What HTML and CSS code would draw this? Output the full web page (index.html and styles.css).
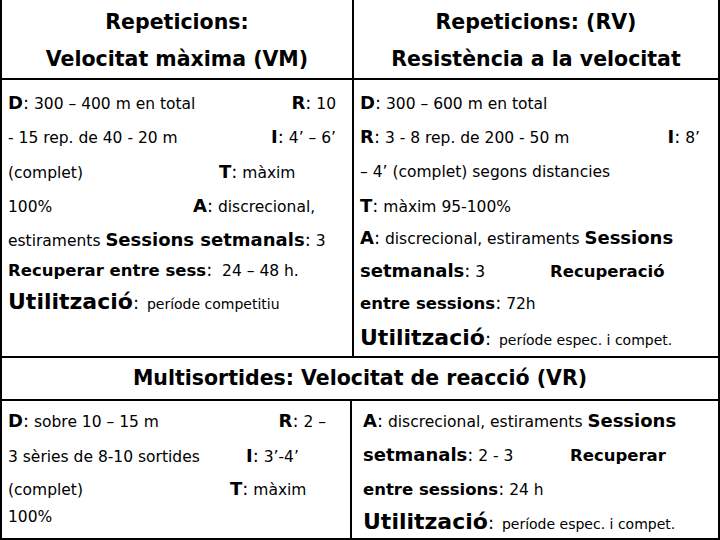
FILE: index.html
```html
<!DOCTYPE html>
<html lang="ca">
<head>
<meta charset="utf-8">
<title>Repeticions</title>
<link rel="stylesheet" href="styles.css">
</head>
<body>
<div class="sheet">
  <div class="hrow">
    <div class="hcell left">Repeticions:<br>Velocitat màxima (VM)</div>
    <div class="hcell">Repeticions: (RV)<br>Resistència a la velocitat</div>
  </div>
  <div class="brow">
    <div class="bcell left">
      <div class="ln sb"><span><b>D</b><i>:</i> 300 – 400 m en total</span><span><b>R</b><i>:</i> 10</span></div>
      <div class="ln sb g4"><span>- 15 rep. de 40 - 20 m</span><span><b>I</b><i>:</i> 4’ – 6’</span></div>
      <div class="ln cols g5"><span class="w211">(complet)</span><span><b>T</b><i>:</i> màxim</span></div>
      <div class="ln cols g4"><span class="w185">100%</span><span><b>A</b><i>:</i> discrecional,</span></div>
      <div class="ln g4">estiraments <b>Sessions setmanals</b><i>:</i> 3</div>
      <div class="ln g0"><b class="sm">Recuperar entre sess</b><i>:</i> &nbsp;24 – 48 h.</div>
      <div class="ln ut g2"><b class="big">Utilització</b><i>:</i> <span>període competitiu</span></div>
    </div>
    <div class="bcell">
      <div class="ln"><b>D</b><i>:</i> 300 – 600 m en total</div>
      <div class="ln sb g4"><span><b>R</b><i>:</i> 3 - 8 rep. de 200 - 50 m</span><span class="mr12"><b>I</b><i>:</i> 8’</span></div>
      <div class="ln g5">– 4’ (complet) segons distancies</div>
      <div class="ln g4"><b>T</b><i>:</i> màxim 95-100%</div>
      <div class="ln g2"><b>A</b><i>:</i> discrecional, estiraments <b>Sessions</b></div>
      <div class="ln cols g3"><span class="w190"><b>setmanals</b><i>:</i> 3</span><b class="sm">Recuperació</b></div>
      <div class="ln g2"><b class="sm">entre sessions</b><i>:</i> 72h</div>
      <div class="ln ut g5"><b class="big">Utilització</b><i>:</i> <span>període espec. i compet.</span></div>
    </div>
  </div>
  <div class="frow">Multisortides: Velocitat de reacció (VR)</div>
  <div class="brow last">
    <div class="bcell left">
      <div class="ln sb"><span><b>D</b><i>:</i> sobre 10 – 15 m</span><span class="mr8"><b>R</b><i>:</i> 2 –</span></div>
      <div class="ln cols g5"><span class="w238">3 sèries de 8-10 sortides</span><span><b>I</b><i>:</i> 3’-4’</span></div>
      <div class="ln cols g3"><span class="w222">(complet)</span><span><b>T</b><i>:</i> màxim</span></div>
      <div class="ln gn2">100%</div>
    </div>
    <div class="bcell">
      <div class="ln"><b>A</b><i>:</i> discrecional, estiraments <b>Sessions</b></div>
      <div class="ln cols g4"><span class="w207"><b>setmanals</b><i>:</i> 2 - 3</span><b class="sm">Recuperar</b></div>
      <div class="ln g4"><b class="sm">entre sessions</b><i>:</i> 24 h</div>
      <div class="ln ut g3"><b class="big">Utilització</b><i>:</i> <span>període espec. i compet.</span></div>
    </div>
  </div>
</div>
</body>
</html>
```
FILE: styles.css
```css
* { box-sizing: border-box; }
html, body { margin: 0; padding: 0; background: #fff; }
body {
  font-family: "DejaVu Sans", Verdana, sans-serif;
  color: #000;
}
.sheet {
  width: 720px;
  height: 540px;
  border-left: 2px solid #000;
  border-right: 2px solid #000;
  border-bottom: 2px solid #000;
  display: flex;
  flex-direction: column;
}
.hrow {
  display: flex;
  height: 80px;
  border-bottom: 2px solid #000;
}
.hcell {
  flex: 1;
  text-align: center;
  font-weight: 700;
  font-size: 20.5px;
  line-height: 37px;
  padding-top: 4px;
}
.hcell.left { flex: 0 0 352px; border-right: 2px solid #000; }
.brow {
  display: flex;
  height: 278px;
  border-bottom: 2px solid #000;
}
.bcell {
  flex: 1;
  padding: 8px 6px 0 6px;
  font-size: 15.5px;
}
.bcell.left { flex: 0 0 352px; border-right: 2px solid #000; padding-left: 6px; padding-right: 16px; }
.brow.last { height: auto; flex: 1; border-bottom: 0; }
.brow.last .bcell { padding-top: 5px; padding-left: 11px; }
.brow.last .bcell.left { flex: 0 0 350px; padding-left: 6px; }
.frow {
  height: 43px;
  border-bottom: 2px solid #000;
  text-align: center;
  font-weight: 700;
  font-size: 20.5px;
  line-height: 41px;
}
.ln { white-space: nowrap; height: 30px; line-height: 30px; }
.ln.sb { display: flex; justify-content: space-between; align-items: baseline; }
.ln.cols { display: flex; align-items: baseline; }
.g0 { margin-top: 0; }
.g2 { margin-top: 2px; }
.g3 { margin-top: 3px; }
.g4 { margin-top: 4px; }
.g5 { margin-top: 5px; }
.gn2 { margin-top: -2px; }
.ln b { font-weight: 700; font-size: 18px; }
.ln b.big { font-size: 22px; }
.ln b.sm { font-size: 16.5px; }
.ln i { font-style: normal; font-size: 18px; }
.ln.ut i { margin-right: 3px; }
.ln.ut span { font-size: 14px; }
.mr8 { margin-right: 8px; }
.mr12 { margin-right: 12px; }
.w185 { flex: 0 0 185px; }
.w190 { flex: 0 0 190px; }
.w207 { flex: 0 0 207px; }
.w211 { flex: 0 0 211px; }
.w222 { flex: 0 0 222px; }
.w238 { flex: 0 0 238px; }
```
